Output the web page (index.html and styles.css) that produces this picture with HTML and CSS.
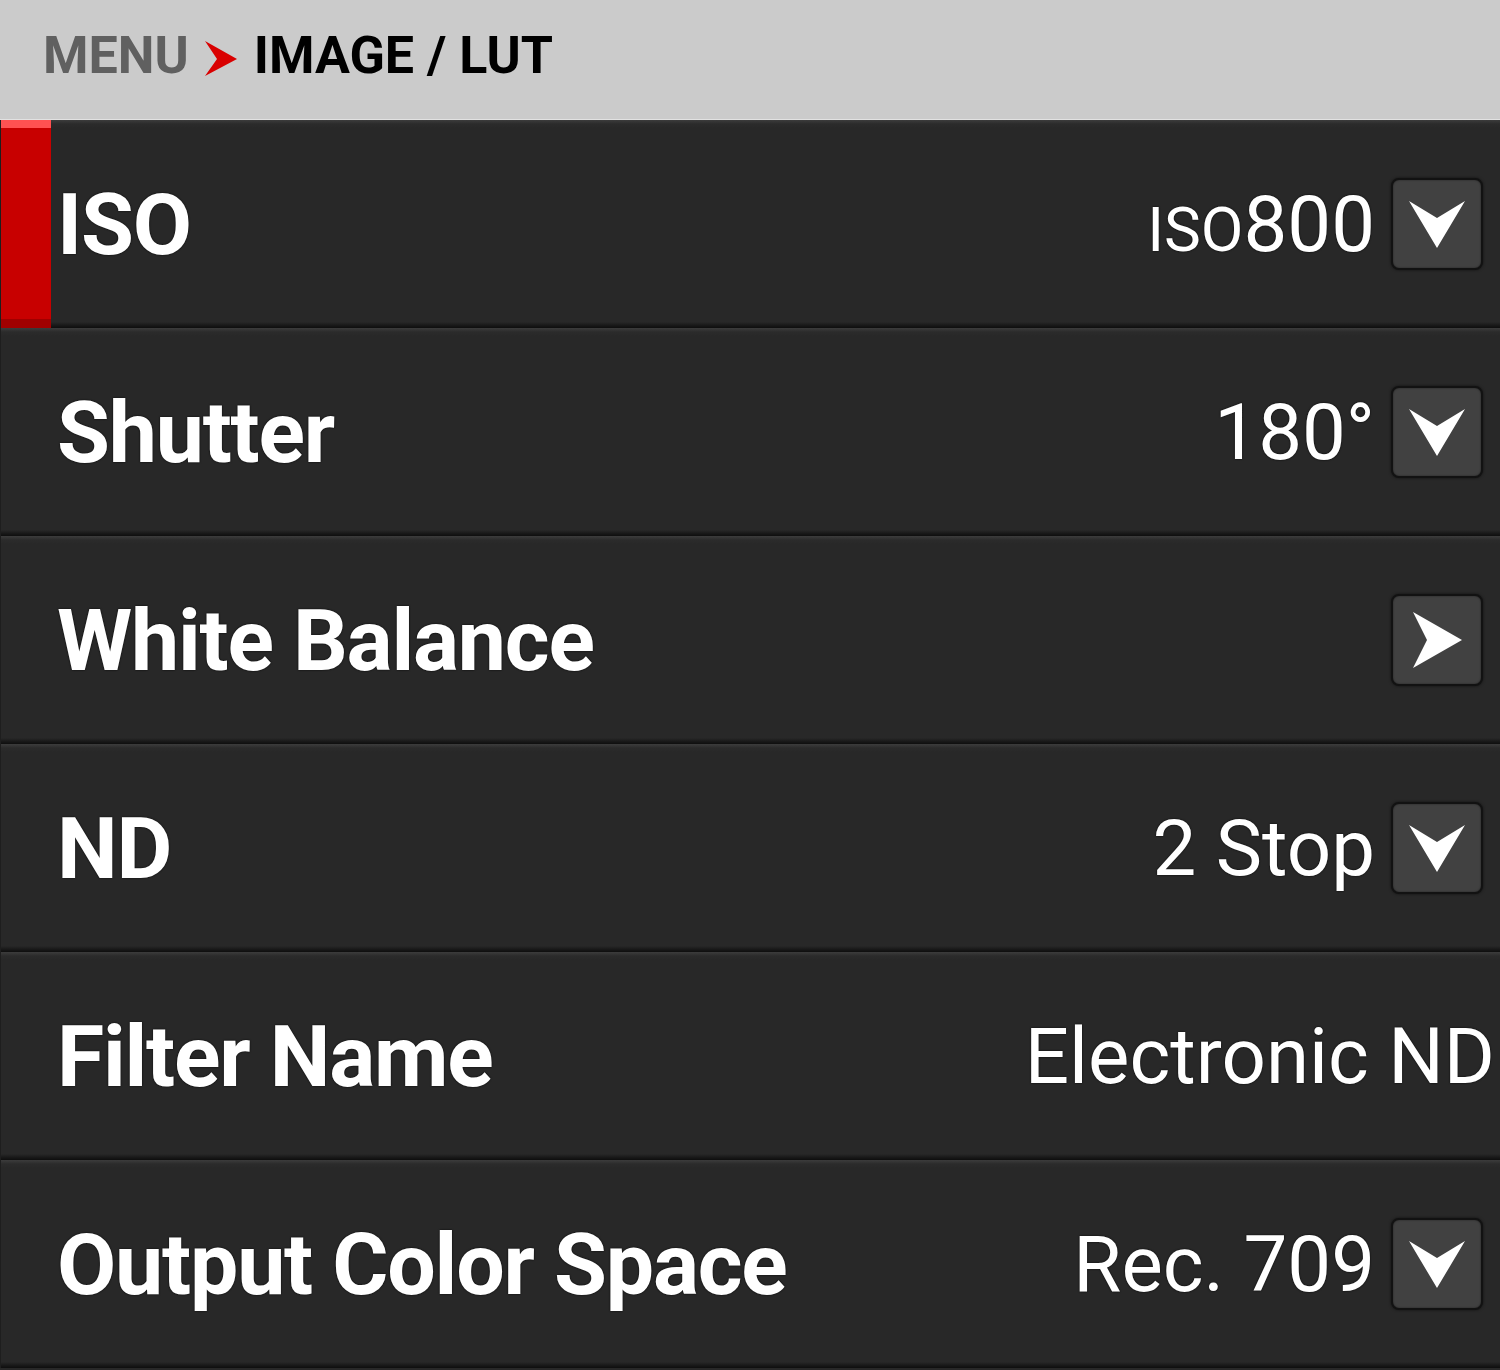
FILE: index.html
```html
<!DOCTYPE html>
<html lang="en">

<head>
    <meta charset="UTF-8">
    <meta name="viewport" content="width=device-width, initial-scale=1.0">
    <title>Image / LUT</title>
    <link rel="stylesheet" href="styles.css">
</head>

<body>
    <div class="header">
        <span class="crumb">MENU</span>
        <svg class="sep" width="32" height="35" viewBox="0 0 32 35">
            <polygon points="0,0 32,18 0,35 12,18" fill="#d90000" />
        </svg>
        <span class="title">IMAGE / LUT</span>
    </div>

    <div class="list">
        <div class="row">
            <span class="mark"></span>
            <span class="label">ISO</span>
            <span class="value"><span class="pre">ISO</span>800</span>
            <div class="btn">
                <svg width="88" height="88" viewBox="0 0 88 88">
                    <polygon points="16,21 44,38 72,21 44,68" fill="#fff" />
                </svg>
            </div>
        </div>
        <div class="row">
            <span class="label">Shutter</span>
            <span class="value">180°</span>
            <div class="btn">
                <svg width="88" height="88" viewBox="0 0 88 88">
                    <polygon points="16,21 44,38 72,21 44,68" fill="#fff" />
                </svg>
            </div>
        </div>
        <div class="row">
            <span class="label">White Balance</span>
            <div class="btn">
                <svg width="88" height="88" viewBox="0 0 88 88">
                    <polygon points="20,16 69,44 20,72 34,44" fill="#fff" />
                </svg>
            </div>
        </div>
        <div class="row">
            <span class="label">ND</span>
            <span class="value">2 Stop</span>
            <div class="btn">
                <svg width="88" height="88" viewBox="0 0 88 88">
                    <polygon points="16,21 44,38 72,21 44,68" fill="#fff" />
                </svg>
            </div>
        </div>
        <div class="row">
            <span class="label">Filter Name</span>
            <span class="value wide">Electronic ND</span>
        </div>
        <div class="row">
            <span class="label">Output Color Space</span>
            <span class="value">Rec. 709</span>
            <div class="btn">
                <svg width="88" height="88" viewBox="0 0 88 88">
                    <polygon points="16,21 44,38 72,21 44,68" fill="#fff" />
                </svg>
            </div>
        </div>
    </div>
</body>

</html>
```

FILE: styles.css
```css
body {
    margin: 0;
    background-color: #282828;
    font-family: Roboto, "Liberation Sans", sans-serif;
}

.header {
    height: 120px;
    box-sizing: border-box;
    padding: 0 0 8px 43px;
    display: flex;
    align-items: center;
    background-color: #cbcbcb;
    border-bottom: 1px solid #e2e2e2;
    font-size: 52px;
    font-weight: bold;
}

.crumb {
    color: #606060;
}

.sep {
    margin: 6px 17px 0 16px;
}

.title {
    color: #000;
}

.row {
    position: relative;
    height: 208px;
    box-sizing: border-box;
    padding: 0 17px 0 56px;
    display: flex;
    align-items: center;
    border-left: 1px solid #1e1e1e;
    background: linear-gradient(#3c3c3c 0, #2b2b2b 4px, #282828 8px, #282828 calc(100% - 6px), #1a1a1a calc(100% - 3px), #0e0e0e 100%);
}

.mark {
    position: absolute;
    left: 0;
    top: 0;
    width: 50px;
    height: 100%;
    background: linear-gradient(#ff5252 0, #ff5252 8px, #c80000 8px, #c80000 calc(100% - 9px), #a00000 calc(100% - 9px));
}

.label {
    flex: 1;
    color: #fff;
    font-size: 86px;
    font-weight: bold;
    letter-spacing: -1.2px;
    text-shadow: 0 0 2px #000;
}

.value {
    color: #fff;
    font-size: 78px;
    margin-right: 16px;
    text-shadow: 0 0 2px #000;
}

.value .pre {
    font-size: 62px;
}

.value.wide {
    margin-right: -12px;
}

.btn {
    width: 88px;
    height: 88px;
    border: 2px solid #121212;
    border-radius: 8px;
    background-color: #414141;
    box-shadow: 0 0 3px rgba(0, 0, 0, 0.6), inset 0 0 2px rgba(0, 0, 0, 0.5);
}

.btn svg {
    display: block;
}
```
